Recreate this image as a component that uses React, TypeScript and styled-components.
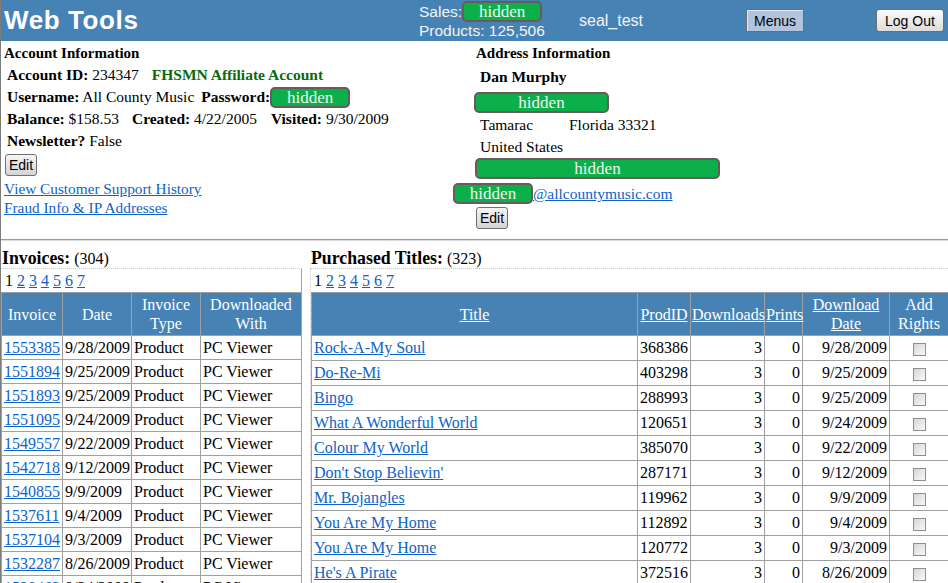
import React from "react";
import styled, { createGlobalStyle } from "styled-components";

const Global = createGlobalStyle`
  html, body { margin: 0; padding: 0; background: #fff; }
  body {
    font-family: "Liberation Serif", "Times New Roman", serif;
    font-size: 16px;
    color: #000;
    overflow: hidden;
  }
`;

const Page = styled.div`
  width: 948px;
  height: 583px;
  overflow: hidden;
  border-left: 1px solid #7c7c7c;
  box-sizing: border-box;
`;

/* ---------- top bar ---------- */
const TopBar = styled.header`
  height: 41px;
  background: #4682b4;
  display: flex;
  align-items: center;
  font-family: "Liberation Sans", Arial, sans-serif;
  color: #f4f4f4;
`;

const Brand = styled.div`
  width: 418px;
  padding-left: 3px;
  box-sizing: border-box;
  font-size: 26px;
  font-weight: bold;
  color: #fff;
  letter-spacing: 0.6px;
`;

const Stats = styled.div`
  width: 160px;
  align-self: flex-start;
  display: flex;
  flex-direction: column;
  font-size: 15.5px;
`;

const StatLine = styled.div`
  display: flex;
  align-items: center;
  height: ${(p: { $h: number }) => p.$h}px;
`;

const UserName = styled.div`
  width: 167px;
  font-size: 16px;
`;

const BarButton = styled.button<{ $variant: "menu" | "plain" }>`
  font-family: "Liberation Sans", Arial, sans-serif;
  font-size: 14px;
  color: #000;
  height: 23px;
  padding: 0 ${(p) => (p.$variant === "menu" ? 7 : 8)}px;
  border: 1px solid #6e6e6e;
  border-radius: ${(p) => (p.$variant === "menu" ? "0" : "3px")};
  background: ${(p) =>
    p.$variant === "menu"
      ? "#b0c4de"
      : "linear-gradient(#fbfbfb, #dcdcdc)"};
  box-shadow: ${(p) => (p.$variant === "menu" ? "inset 1px 1px 0 #dfe8f2" : "none")};
`;

const LogOutWrap = styled.div`
  margin-left: 72px;
`;

/* ---------- green masks ---------- */
const Mask = styled.span<{ $w: number; $h?: number }>`
  display: inline-flex;
  align-items: center;
  justify-content: center;
  width: ${(p) => p.$w}px;
  height: ${(p) => p.$h ?? 21}px;
  box-sizing: border-box;
  background: #0cb04a;
  border: 2px solid #6a5a5a;
  border-radius: 5px;
  color: #f2f2f2;
  font-family: "Liberation Serif", "Times New Roman", serif;
  font-size: 17px;
  line-height: 1;
  vertical-align: middle;
`;

/* ---------- info section ---------- */
const InfoSection = styled.section`
  display: flex;
  height: 198px;
  border-bottom: 1px solid #9a9a9a;
  box-shadow: 0 1px 0 #dcdcdc;
`;

const AccountPanel = styled.div`
  width: 452px;
  padding: 3px 0 0 3px;
  box-sizing: border-box;
  display: flex;
  flex-direction: column;
  align-items: flex-start;
`;

const AddressPanel = styled.div`
  flex: 1;
  padding-top: 3px;
  display: flex;
  flex-direction: column;
  align-items: flex-start;
`;

const Heading = styled.div<{ $indent?: number }>`
  font-weight: bold;
  font-size: 15px;
  line-height: 18px;
  padding-left: ${(p) => p.$indent ?? 0}px;
`;

const InfoRow = styled.div<{ $indent?: number; $top?: number; $lh?: number }>`
  display: flex;
  align-items: center;
  font-size: 15.5px;
  line-height: ${(p) => p.$lh ?? 22}px;
  height: ${(p) => p.$lh ?? 22}px;
  padding-left: ${(p) => p.$indent ?? 0}px;
  margin-top: ${(p) => p.$top ?? 0}px;
  white-space: pre;
`;

const Label = styled.b`
  font-weight: bold;
`;

const Pair = styled.span<{ $gap?: number }>`
  margin-left: ${(p) => p.$gap ?? 0}px;
`;

const Affiliate = styled.b`
  color: #0a6a0a;
  margin-left: 13px;
`;

const CityCell = styled.span`
  display: inline-block;
  width: 89px;
`;

const EditButton = styled.button<{ $top: number; $left?: number }>`
  font-family: "Liberation Sans", Arial, sans-serif;
  font-size: 14px;
  height: 22px;
  padding: 0 3px;
  margin-top: ${(p) => p.$top}px;
  margin-left: ${(p) => p.$left ?? 0}px;
  border: 1px solid #707070;
  border-radius: 3px;
  background: linear-gradient(#f6f6f6, #d4d4d4);
  color: #000;
`;

const Link = styled.a`
  color: #0d63c9;
  text-decoration: underline;
  cursor: pointer;
`;

const LinkRow = styled.div<{ $top?: number }>`
  font-size: 15.3px;
  line-height: 19px;
  margin-top: ${(p) => p.$top ?? 0}px;
`;

/* ---------- lists ---------- */
const ListsSection = styled.section`
  display: flex;
  align-items: flex-start;
  padding-top: 9px;
`;

const InvoicePanel = styled.div`
  width: 301px;
  flex-shrink: 0;
`;

const TitlesPanel = styled.div`
  margin-left: 8px;
  flex: 1;
  min-width: 0;
`;

const ListHeading = styled.div<{ $indent?: number }>`
  line-height: 19px;
  height: 19px;
  padding-left: ${(p) => p.$indent ?? 0}px;
  white-space: nowrap;
`;

const ListTitle = styled.b`
  font-size: 17.8px;
`;

const ListBody = styled.div<{ $side: "right" | "left" }>`
  border-top: 1px dotted #c8c8c8;
  border-right: ${(p) => (p.$side === "right" ? "1px solid #a0a0a0" : "none")};
  border-left: ${(p) => (p.$side === "left" ? "1px dotted #c8c8c8" : "none")};
`;

const Pager = styled.div<{ $indent: number }>`
  line-height: 23px;
  height: 23px;
  padding-left: ${(p) => p.$indent}px;
  white-space: pre;
`;

const DataTable = styled.table<{ $width: number }>`
  border-collapse: collapse;
  table-layout: fixed;
  width: ${(p) => p.$width}px;
`;

const Col = styled.col<{ $w: number }>`
  width: ${(p) => p.$w}px;
`;

const HeadCell = styled.th`
  background: #4682b4;
  color: #fff;
  font-weight: normal;
  border: 1px solid #a0a0a0;
  height: 42px;
  padding: 0 1px;
  line-height: 19px;
  text-align: center;
  white-space: nowrap;
`;

const HeadLink = styled.a`
  color: #fff;
  text-decoration: underline;
`;

const Cell = styled.td<{ $align?: "left" | "right" | "center"; $h: number }>`
  border: 1px solid #a0a0a0;
  height: ${(p) => p.$h}px;
  padding: 0 2px;
  white-space: nowrap;
  overflow: hidden;
  text-align: ${(p) => p.$align ?? "left"};
  vertical-align: middle;
`;

const Check = styled.input.attrs({ type: "checkbox" })`
  appearance: none;
  width: 13px;
  height: 13px;
  margin: 0;
  vertical-align: middle;
  border: 1px solid #8e8e8e;
  background: linear-gradient(135deg, #d6d6d6, #f8f8f8);
  box-sizing: border-box;
`;

const invoices: [string, string][] = [
  ["1553385", "9/28/2009"],
  ["1551894", "9/25/2009"],
  ["1551893", "9/25/2009"],
  ["1551095", "9/24/2009"],
  ["1549557", "9/22/2009"],
  ["1542718", "9/12/2009"],
  ["1540855", "9/9/2009"],
  ["1537611", "9/4/2009"],
  ["1537104", "9/3/2009"],
  ["1532287", "8/26/2009"],
  ["1529463", "8/24/2009"],
];

const titles: [string, string, string][] = [
  ["Rock-A-My Soul", "368386", "9/28/2009"],
  ["Do-Re-Mi", "403298", "9/25/2009"],
  ["Bingo", "288993", "9/25/2009"],
  ["What A Wonderful World", "120651", "9/24/2009"],
  ["Colour My World", "385070", "9/22/2009"],
  ["Don't Stop Believin'", "287171", "9/12/2009"],
  ["Mr. Bojangles", "119962", "9/9/2009"],
  ["You Are My Home", "112892", "9/4/2009"],
  ["You Are My Home", "120772", "9/3/2009"],
  ["He's A Pirate", "372516", "8/26/2009"],
];

const PageLinks = () => (
  <>
    1 <Link>2</Link> <Link>3</Link> <Link>4</Link> <Link>5</Link> <Link>6</Link>{" "}
    <Link>7</Link>
  </>
);

export default function App() {
  return (
    <Page>
      <Global />
      <TopBar>
        <Brand>Web Tools</Brand>
        <Stats>
          <StatLine $h={23}>
            Sales:<Mask $w={80} $h={21}>hidden</Mask>
          </StatLine>
          <StatLine $h={15}>Products: 125,506</StatLine>
        </Stats>
        <UserName>seal_test</UserName>
        <BarButton $variant="menu">Menus</BarButton>
        <LogOutWrap>
          <BarButton $variant="plain">Log Out</BarButton>
        </LogOutWrap>
      </TopBar>

      <InfoSection>
        <AccountPanel>
          <Heading>Account Information</Heading>
          <InfoRow $indent={3} $top={2}>
            <Label>Account ID:</Label> 234347
            <Affiliate>FHSMN Affiliate Account</Affiliate>
          </InfoRow>
          <InfoRow $indent={3}>
            <Label>Username:</Label> All County Music
            <Pair $gap={7}>
              <Label>Password:</Label>
            </Pair>
            <Mask $w={80} $h={21}>hidden</Mask>
          </InfoRow>
          <InfoRow $indent={3}>
            <Label>Balance:</Label> $158.53
            <Pair $gap={13}>
              <Label>Created:</Label> 4/22/2005
            </Pair>
            <Pair $gap={14}>
              <Label>Visited:</Label> 9/30/2009
            </Pair>
          </InfoRow>
          <InfoRow $indent={3}>
            <Label>Newsletter?</Label> False
          </InfoRow>
          <EditButton $top={2} $left={1}>Edit</EditButton>
          <LinkRow $top={3}>
            <Link>View Customer Support History</Link>
          </LinkRow>
          <LinkRow>
            <Link>Fraud Info &amp; IP Addresses</Link>
          </LinkRow>
        </AccountPanel>

        <AddressPanel>
          <Heading $indent={23}>Address Information</Heading>
          <InfoRow $indent={27} $top={4}>
            <Label>Dan Murphy</Label>
          </InfoRow>
          <InfoRow $indent={21} $top={4} $lh={21}>
            <Mask $w={135} $h={21}>hidden</Mask>
          </InfoRow>
          <InfoRow $indent={27} $lh={23}>
            <CityCell>Tamarac</CityCell>Florida 33321
          </InfoRow>
          <InfoRow $indent={27}>United States</InfoRow>
          <InfoRow $indent={22} $lh={21}>
            <Mask $w={245} $h={21}>hidden</Mask>
          </InfoRow>
          <InfoRow $top={4} $lh={21}>
            <Mask $w={80} $h={21}>hidden</Mask>
            <Link>@allcountymusic.com</Link>
          </InfoRow>
          <EditButton $top={3} $left={23}>Edit</EditButton>
        </AddressPanel>
      </InfoSection>

      <ListsSection>
        <InvoicePanel>
          <ListHeading $indent={1}>
            <ListTitle>Invoices:</ListTitle> (304)
          </ListHeading>
          <ListBody $side="right">
            <Pager $indent={4}>
              <PageLinks />
            </Pager>
            <DataTable $width={300}>
              <colgroup>
                <Col $w={61} />
                <Col $w={69} />
                <Col $w={69} />
                <Col $w={101} />
              </colgroup>
              <thead>
                <tr>
                  <HeadCell>Invoice</HeadCell>
                  <HeadCell>Date</HeadCell>
                  <HeadCell>
                    Invoice
                    <br />
                    Type
                  </HeadCell>
                  <HeadCell>
                    Downloaded
                    <br />
                    With
                  </HeadCell>
                </tr>
              </thead>
              <tbody>
                {invoices.map(([id, date]) => (
                  <tr key={id}>
                    <Cell $h={23}>
                      <Link>{id}</Link>
                    </Cell>
                    <Cell $h={23}>{date}</Cell>
                    <Cell $h={23}>Product</Cell>
                    <Cell $h={23}>PC Viewer</Cell>
                  </tr>
                ))}
              </tbody>
            </DataTable>
          </ListBody>
        </InvoicePanel>

        <TitlesPanel>
          <ListHeading $indent={1}>
            <ListTitle>Purchased Titles:</ListTitle> (323)
          </ListHeading>
          <ListBody $side="left">
            <Pager $indent={3}>
              <PageLinks />
            </Pager>
            <DataTable $width={637}>
              <colgroup>
                <Col $w={326} />
                <Col $w={53} />
                <Col $w={74} />
                <Col $w={38} />
                <Col $w={87} />
                <Col $w={59} />
              </colgroup>
              <thead>
                <tr>
                  <HeadCell>
                    <HeadLink>Title</HeadLink>
                  </HeadCell>
                  <HeadCell>
                    <HeadLink>ProdID</HeadLink>
                  </HeadCell>
                  <HeadCell>
                    <HeadLink>Downloads</HeadLink>
                  </HeadCell>
                  <HeadCell>
                    <HeadLink>Prints</HeadLink>
                  </HeadCell>
                  <HeadCell>
                    <HeadLink>
                      Download
                      <br />
                      Date
                    </HeadLink>
                  </HeadCell>
                  <HeadCell>
                    Add
                    <br />
                    Rights
                  </HeadCell>
                </tr>
              </thead>
              <tbody>
                {titles.map(([title, pid, date]) => (
                  <tr key={pid}>
                    <Cell $h={24}>
                      <Link>{title}</Link>
                    </Cell>
                    <Cell $h={24}>{pid}</Cell>
                    <Cell $h={24} $align="right">3</Cell>
                    <Cell $h={24} $align="right">0</Cell>
                    <Cell $h={24} $align="right">{date}</Cell>
                    <Cell $h={24} $align="center">
                      <Check />
                    </Cell>
                  </tr>
                ))}
              </tbody>
            </DataTable>
          </ListBody>
        </TitlesPanel>
      </ListsSection>
    </Page>
  );
}
